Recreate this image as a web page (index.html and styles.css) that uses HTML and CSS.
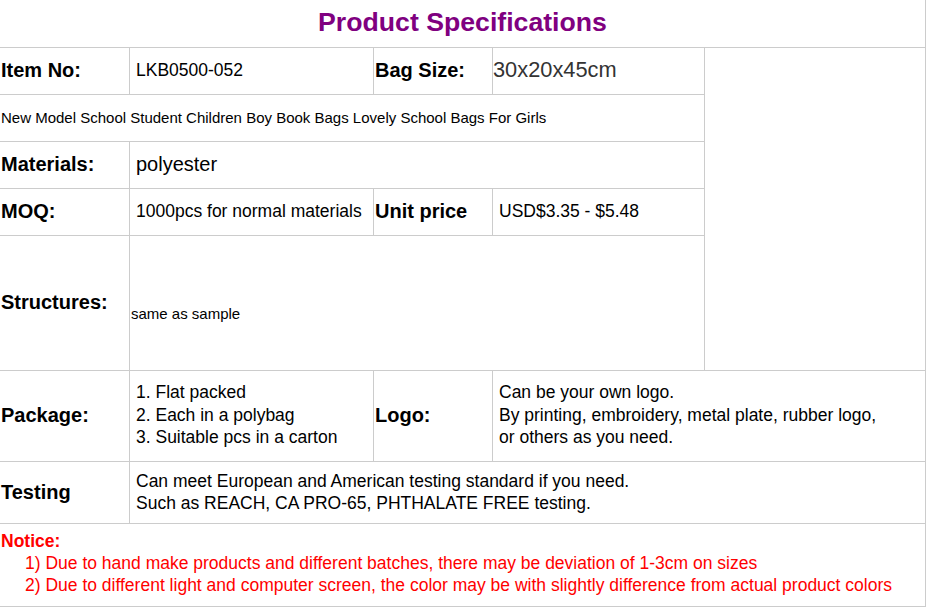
FILE: index.html
```html
<!DOCTYPE html>
<html lang="en">
<head>
<meta charset="utf-8">
<title>Product Specifications</title>
<link rel="stylesheet" href="styles.css">
</head>
<body>
<div class="spec">
  <div class="cell title span-5">Product Specifications</div>

  <div class="cell label">Item No:</div>
  <div class="cell value">LKB0500-052</div>
  <div class="cell label label-mid">Bag Size:</div>
  <div class="cell value size">30x20x45cm</div>
  <div class="cell blank rows-5"></div>

  <div class="cell desc span-4">New Model School Student Children Boy Book Bags Lovely School Bags For Girls</div>

  <div class="cell label">Materials:</div>
  <div class="cell value big span-3">polyester</div>

  <div class="cell label">MOQ:</div>
  <div class="cell value">1000pcs for normal materials</div>
  <div class="cell label label-mid">Unit price</div>
  <div class="cell value">USD$3.35 - $5.48</div>

  <div class="cell label">Structures:</div>
  <div class="cell small span-3 low">same as sample</div>

  <div class="cell label">Package:</div>
  <div class="cell value lines">
    <div>1. Flat packed</div>
    <div>2. Each in a polybag</div>
    <div>3. Suitable pcs in a carton</div>
  </div>
  <div class="cell label label-mid">Logo:</div>
  <div class="cell value lines span-2">
    <div>Can be your own logo.</div>
    <div>By printing, embroidery, metal plate, rubber logo,</div>
    <div>or others as you need.</div>
  </div>

  <div class="cell label">Testing</div>
  <div class="cell value lines tight span-4">
    <div>Can meet European and American testing standard if you need.</div>
    <div>Such as REACH, CA PRO-65, PHTHALATE FREE testing.</div>
  </div>

  <div class="cell notice span-5">
    <div class="notice-head">Notice:</div>
    <div class="notice-item">1) Due to hand make products and different batches, there may be deviation of 1-3cm on sizes</div>
    <div class="notice-item">2) Due to different light and computer screen, the color may be with slightly difference from actual product colors</div>
  </div>
</div>
</body>
</html>
```

FILE: styles.css
```css
* { box-sizing: border-box; }

html, body {
  margin: 0;
  padding: 0;
  background: #ffffff;
}

body {
  font-family: "Liberation Sans", Arial, sans-serif;
  color: #000;
}

.spec {
  display: grid;
  grid-template-columns: 130px 244px 119px 212px 221px;
  grid-template-rows: 48px 47px 47px 47px 47px 135px 91px 62px 83px;
  width: 926px;
}

.cell {
  border-right: 1px solid #cccccc;
  border-bottom: 1px solid #cccccc;
  display: flex;
  align-items: center;
  padding: 0 1px 2px 1px;
  font-size: 17.5px;
  line-height: 22px;
}

.span-2 { grid-column: span 2; }
.span-3 { grid-column: span 3; }
.span-4 { grid-column: span 4; }
.span-5 { grid-column: span 5; }
.rows-5 { grid-row: span 5; }

.title {
  justify-content: center;
  font-size: 26.67px;
  font-weight: bold;
  color: #800080;
  padding-bottom: 4px;
}

.label {
  font-size: 20px;
  font-weight: bold;
  padding-left: 1px;
}

.label-mid { padding-left: 1px; }

.value { padding-left: 6px; }

.size {
  padding-left: 0;
  font-size: 21.8px;
  color: #333333;
}

.big { font-size: 20px; }

.desc {
  font-size: 15px;
  padding-bottom: 0;
}

.small {
  font-size: 15px;
  padding-left: 1px;
}

.low { padding-top: 24px; }

.lines {
  flex-direction: column;
  align-items: flex-start;
  justify-content: center;
  line-height: 22.5px;
  padding-left: 6px;
}

.tight { line-height: 22px; }

.notice {
  flex-direction: column;
  align-items: flex-start;
  justify-content: center;
  color: #ff0000;
  padding-left: 1px;
  padding-bottom: 5px;
}

.notice-head {
  font-weight: bold;
}

.notice-item {
  padding-left: 24px;
}
```
